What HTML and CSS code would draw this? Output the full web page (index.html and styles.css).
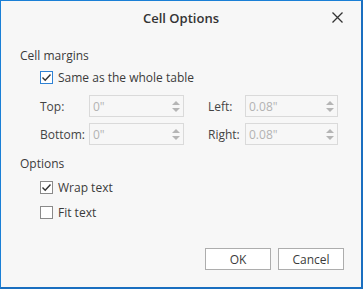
FILE: index.html
```html
<!DOCTYPE html>
<html>
<head>
<meta charset="utf-8">
<link rel="stylesheet" href="styles.css">
</head>
<body>
<div class="dialog">
  <div class="titlebar">
    <span></span>
    <span class="title">Cell Options</span>
    <span class="close">
      <svg width="11" height="11" viewBox="0 0 11 11"><path d="M0.5 0.5L10.5 10.5M10.5 0.5L0.5 10.5" stroke="#333" stroke-width="1.3" fill="none"/></svg>
    </span>
  </div>
  <div class="body">
    <div class="group-label first">Cell margins</div>
    <label class="check-row row-same">
      <span class="box focused"><svg width="11" height="11" viewBox="0 0 11 11"><path d="M1.5 5.5L4.2 8.2L9.5 2.5" stroke="#333" stroke-width="1.4" fill="none"/></svg></span>
      <span>Same as the whole table</span>
    </label>
    <div class="fields">
      <span class="flabel">Top:</span>
      <div class="spin"><span class="val">0"</span><span class="arrows"><i class="up"></i><i class="down"></i></span></div>
      <span class="flabel second-col">Left:</span>
      <div class="spin"><span class="val">0.08"</span><span class="arrows"><i class="up"></i><i class="down"></i></span></div>
      <span class="flabel">Bottom:</span>
      <div class="spin"><span class="val">0"</span><span class="arrows"><i class="up"></i><i class="down"></i></span></div>
      <span class="flabel second-col">Right:</span>
      <div class="spin"><span class="val">0.08"</span><span class="arrows"><i class="up"></i><i class="down"></i></span></div>
    </div>
    <div class="group-label second">Options</div>
    <label class="check-row row-wrap">
      <span class="box"><svg width="11" height="11" viewBox="0 0 11 11"><path d="M1.5 5.5L4.2 8.2L9.5 2.5" stroke="#333" stroke-width="1.4" fill="none"/></svg></span>
      <span>Wrap text</span>
    </label>
    <label class="check-row row-fit">
      <span class="box"></span>
      <span>Fit text</span>
    </label>
  </div>
  <div class="buttons">
    <button class="btn">OK</button>
    <button class="btn">Cancel</button>
  </div>
</div>
</body>
</html>
```

FILE: styles.css
```css
html, body {
  margin: 0;
  padding: 0;
  background: #f7f7f7;
}
.dialog {
  width: 363px;
  height: 289px;
  box-sizing: border-box;
  border: 1px solid #1a7fd6;
  border-right: 2px solid #1a6fc0;
  border-bottom: 2px solid #1a6fc0;
  background: #f7f7f7;
  font-family: "Open Sans", "Noto Sans", sans-serif;
  font-size: 12px;
  color: #3b3b3b;
  display: flex;
  flex-direction: column;
}
.titlebar {
  height: 33px;
  display: grid;
  grid-template-columns: 1fr auto 1fr;
  align-items: center;
}
.title {
  font-weight: 600;
  font-size: 13px;
  color: #333;
}
.close {
  justify-self: end;
  margin-right: 18px;
  display: flex;
}
.body {
  padding-left: 19px;
  display: flex;
  flex-direction: column;
}
.group-label {
  line-height: 16px;
}
.group-label.first { margin-top: 14px; }
.group-label.second { margin-top: 11px; }
.check-row {
  display: flex;
  align-items: center;
  gap: 5px;
  padding-left: 20px;
  height: 20px;
}
.row-same { margin-top: 3px; }
.row-wrap { margin-top: 5px; }
.row-fit { margin-top: 5px; }
.box {
  width: 13px;
  height: 13px;
  box-sizing: border-box;
  border: 1px solid #8a8a8a;
  background: #fff;
  display: flex;
  align-items: center;
  justify-content: center;
}
.box.focused {
  border-color: #2f82d4;
}
.fields {
  margin-top: 8px;
  padding-left: 20px;
  display: grid;
  grid-template-columns: 49px 95px 61px 93px;
  row-gap: 6px;
  align-items: center;
}
.flabel {
  color: #444;
}
.flabel.second-col {
  margin-left: 24px;
}
.spin {
  height: 22px;
  box-sizing: border-box;
  border: 1px solid #dadada;
  background: #f7f7f7;
  display: flex;
  align-items: center;
  justify-content: space-between;
  padding-left: 3px;
  padding-right: 3px;
}
.val {
  color: #b3b3b3;
}
.arrows {
  display: flex;
  flex-direction: column;
  gap: 3px;
}
.arrows i {
  width: 0;
  height: 0;
  border-left: 4px solid transparent;
  border-right: 4px solid transparent;
}
.arrows .up {
  border-bottom: 4px solid #b5b5b5;
}
.arrows .down {
  border-top: 4px solid #b5b5b5;
}
.buttons {
  margin-top: auto;
  margin-bottom: 17px;
  display: flex;
  justify-content: flex-end;
  gap: 7px;
  padding-right: 17px;
}
.btn {
  width: 66px;
  height: 22px;
  box-sizing: border-box;
  border: 1px solid #adadad;
  background: #fff;
  font-family: inherit;
  font-size: 12px;
  color: #3b3b3b;
  padding: 0;
}
```
